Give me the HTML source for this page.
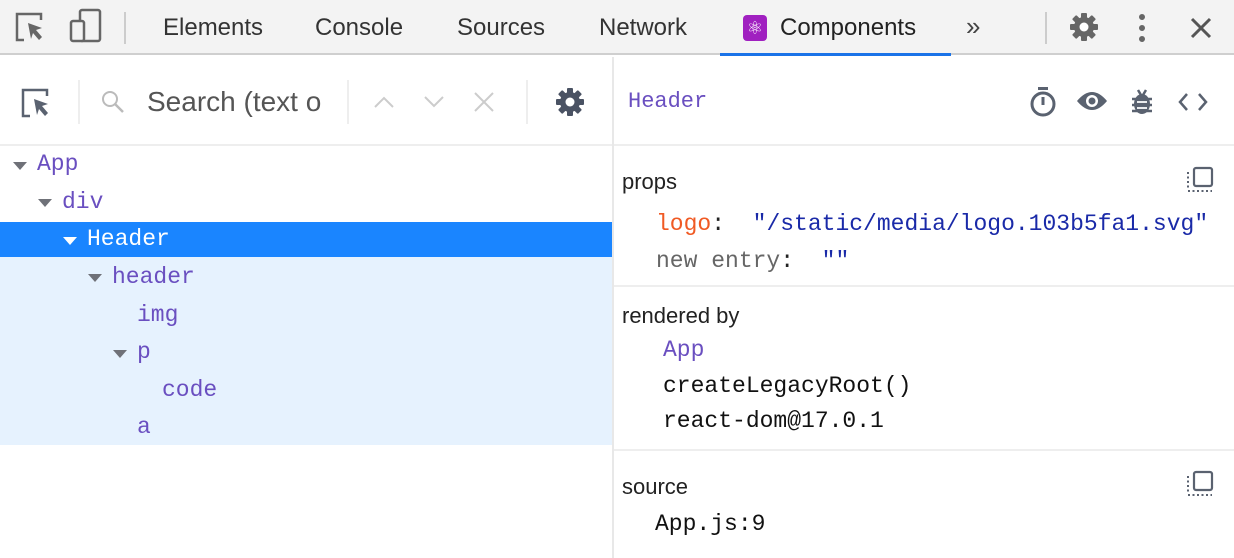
<!DOCTYPE html>
<html><head><meta charset="utf-8"><style>
*{margin:0;padding:0;box-sizing:border-box}
body{width:1234px;height:558px;overflow:hidden;background:#fff;position:relative;font-family:"Liberation Sans",sans-serif}
.a{position:absolute;white-space:nowrap}
.m{font-family:"Liberation Mono","DejaVu Sans Mono",monospace;font-size:23px}
.tab{font-size:24px;color:#333;top:14px}
.pu{color:#6a4fc0}
.tri{position:absolute;width:0;height:0;border-left:7px solid transparent;border-right:7px solid transparent;border-top:8px solid #6f7178}
.s{font-size:22px;color:#222}
</style></head><body>
<svg width="0" height="0" style="position:absolute"><defs>
<g id="gear"><g fill="currentColor"><circle cx="16" cy="16" r="10"/>
<rect x="13" y="2" width="6" height="28" rx="1"/>
<rect x="13" y="2" width="6" height="28" rx="1" transform="rotate(45 16 16)"/>
<rect x="13" y="2" width="6" height="28" rx="1" transform="rotate(90 16 16)"/>
<rect x="13" y="2" width="6" height="28" rx="1" transform="rotate(135 16 16)"/></g>
<circle cx="16" cy="16" r="4.5" fill="#fff"/></g></defs></svg>
<div class="a" style="left:0;top:0;width:1234px;height:55px;background:#f3f3f3;border-bottom:2px solid #cfcfcf"></div>
<svg class="a" style="left:14px;top:10px" width="34" height="34" viewBox="0 0 34 34"><path d="M10 30H3V4h24v6" fill="none" stroke="#666" stroke-width="2.5"/><path d="M14 13l14 5-6 2 6 7-3 3-6-7-2 6z" fill="#666"/></svg>
<svg class="a" style="left:68px;top:8px" width="36" height="36" viewBox="0 0 36 36"><rect x="12" y="2" width="20" height="31" rx="2" fill="none" stroke="#666" stroke-width="2.5"/><rect x="3" y="13" width="13" height="20" rx="2" fill="#f3f3f3" stroke="#666" stroke-width="2.5"/></svg>
<div class="a" style="left:124px;top:12px;width:2px;height:32px;background:#ccc"></div>
<div class="a tab" style="left:163px">Elements</div>
<div class="a tab" style="left:315px">Console</div>
<div class="a tab" style="left:457px">Sources</div>
<div class="a tab" style="left:599px">Network</div>
<div class="a" style="left:743px;top:15px;width:24px;height:26px;background:#a020c0;border-radius:4px;color:#fff;font-size:18px;text-align:center;line-height:26px">⚛</div>
<div class="a tab" style="left:780px;color:#222">Components</div>
<div class="a" style="left:720px;top:53px;width:231px;height:3px;background:#1a73e8"></div>
<div class="a" style="left:966px;top:11px;font-size:26px;color:#444">»</div>
<div class="a" style="left:1045px;top:12px;width:2px;height:32px;background:#ccc"></div>
<svg class="a" style="left:1068px;top:11px;color:#666" width="32" height="32"><use href="#gear"/></svg>
<svg class="a" style="left:1136px;top:12px" width="12" height="32"><circle cx="6" cy="5" r="3" fill="#666"/><circle cx="6" cy="16" r="3" fill="#666"/><circle cx="6" cy="27" r="3" fill="#666"/></svg>
<svg class="a" style="left:1189px;top:16px" width="24" height="24"><path d="M3 3L21 21M21 3L3 21" stroke="#555" stroke-width="3"/></svg>
<div class="a" style="left:0;top:144px;width:1234px;height:2px;background:#eee"></div>
<div class="a" style="left:612px;top:57px;width:2px;height:501px;background:#e8e8e8"></div>
<svg class="a" style="left:20px;top:86px" width="34" height="34" viewBox="0 0 34 34"><path d="M10 30H3V4h24v6" fill="none" stroke="#5a6270" stroke-width="2.5"/><path d="M14 13l14 5-6 2 6 7-3 3-6-7-2 6z" fill="#5a6270"/></svg>
<div class="a" style="left:78px;top:80px;width:2px;height:44px;background:#eee"></div>
<svg class="a" style="left:100px;top:89px" width="26" height="26"><circle cx="10" cy="10" r="7" fill="none" stroke="#bbb" stroke-width="2"/><path d="M15 15l8 8" stroke="#bbb" stroke-width="2.5"/></svg>
<div class="a" style="left:147px;top:86px;font-size:28px;color:#555;width:180px;overflow:hidden">Search (text o</div>
<div class="a" style="left:347px;top:80px;width:2px;height:44px;background:#eee"></div>
<svg class="a" style="left:372px;top:94px" width="24" height="16"><path d="M3 13l9-9 9 9" fill="none" stroke="#ccc" stroke-width="2"/></svg>
<svg class="a" style="left:422px;top:94px" width="24" height="16"><path d="M3 3l9 9 9-9" fill="none" stroke="#ccc" stroke-width="2"/></svg>
<svg class="a" style="left:472px;top:90px" width="24" height="24"><path d="M3 3L21 21M21 3L3 21" stroke="#ccc" stroke-width="2"/></svg>
<div class="a" style="left:526px;top:80px;width:2px;height:44px;background:#eee"></div>
<svg class="a" style="left:554px;top:86px;color:#4a5263" width="32" height="32"><use href="#gear"/></svg>
<div class="a m pu" style="left:628px;top:89px;font-size:22px">Header</div>
<svg class="a" style="left:1028px;top:86px" width="30" height="32"><rect x="10" y="1" width="10" height="3" fill="#5a6270"/><circle cx="15" cy="18" r="11" fill="none" stroke="#5a6270" stroke-width="3"/><path d="M15 11v8" stroke="#5a6270" stroke-width="3"/></svg>
<svg class="a" style="left:1075px;top:89px" width="34" height="24"><path d="M2 12Q17-6 32 12Q17 30 2 12z" fill="#5a6270"/><circle cx="17" cy="12" r="6" fill="#fff"/><circle cx="17" cy="12" r="3.5" fill="#5a6270"/></svg>
<svg class="a" style="left:1129px;top:88px" width="26" height="28"><ellipse cx="13" cy="16" rx="8" ry="10" fill="#5a6270"/><path d="M3 11h20M3 17h20M3 23h20M9 2l3 5M17 2l-3 5" stroke="#5a6270" stroke-width="2.5"/><path d="M8 14h10M8 20h10" stroke="#fff" stroke-width="1.8"/></svg>
<svg class="a" style="left:1177px;top:91px" width="32" height="22"><path d="M10 3L3 11l7 8M22 3l7 8-7 8" fill="none" stroke="#5a6270" stroke-width="2.5"/></svg>
<div class="a" style="left:0;top:222px;width:612px;height:35px;background:#1a85ff"></div>
<div class="a" style="left:0;top:257px;width:612px;height:188px;background:#e6f2fe"></div>
<div class="tri" style="left:13px;top:162px"></div><div class="a m pu" style="left:37px;top:151px">App</div>
<div class="tri" style="left:38px;top:199px"></div><div class="a m pu" style="left:62px;top:189px">div</div>
<div class="tri" style="left:63px;top:237px;border-top-color:#fff"></div><div class="a m" style="left:87px;top:226px;color:#fff">Header</div>
<div class="tri" style="left:88px;top:274px"></div><div class="a m pu" style="left:112px;top:264px">header</div>
<div class="a m pu" style="left:137px;top:302px">img</div>
<div class="tri" style="left:113px;top:350px"></div><div class="a m pu" style="left:137px;top:339px">p</div>
<div class="a m pu" style="left:162px;top:377px">code</div>
<div class="a m pu" style="left:137px;top:414px">a</div>
<div class="a s" style="left:622px;top:169px">props</div>
<svg class="a" style="left:1186px;top:166px" width="28" height="28"><rect x="8" y="2" width="18" height="18" rx="2" fill="none" stroke="#5a6270" stroke-width="2.2"/><path d="M2 6v16M2 25h24" stroke="#5a6270" stroke-width="2" stroke-dasharray="2 2.5"/></svg>
<div class="a m" style="left:656px;top:211px"><span style="color:#f05a24">logo</span><span style="color:#222">:</span>&nbsp;&nbsp;<span style="color:#1a2aa8">"/static/media/logo.103b5fa1.svg"</span></div>
<div class="a m" style="left:656px;top:248px"><span style="color:#666">new entry</span><span style="color:#222">:</span>&nbsp;&nbsp;<span style="color:#1a2aa8">""</span></div>
<div class="a" style="left:614px;top:285px;width:620px;height:2px;background:#eee"></div>
<div class="a s" style="left:622px;top:303px">rendered by</div>
<div class="a m pu" style="left:663px;top:337px">App</div>
<div class="a m" style="left:663px;top:373px;color:#111">createLegacyRoot()</div>
<div class="a m" style="left:663px;top:408px;color:#111">react-dom@17.0.1</div>
<div class="a" style="left:614px;top:449px;width:620px;height:2px;background:#eee"></div>
<div class="a s" style="left:622px;top:474px">source</div>
<svg class="a" style="left:1186px;top:470px" width="28" height="28"><rect x="8" y="2" width="18" height="18" rx="2" fill="none" stroke="#5a6270" stroke-width="2.2"/><path d="M2 6v16M2 25h24" stroke="#5a6270" stroke-width="2" stroke-dasharray="2 2.5"/></svg>
<div class="a m" style="left:655px;top:511px;color:#111">App.js:9</div>
</body></html>
